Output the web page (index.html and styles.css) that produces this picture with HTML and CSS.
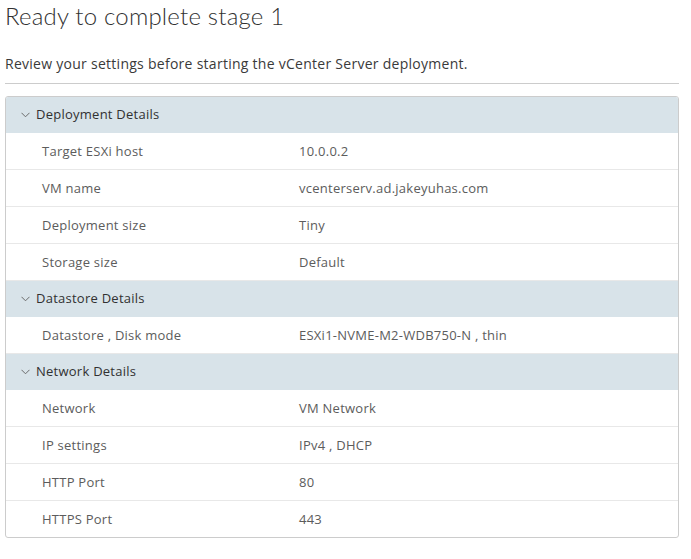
FILE: index.html
```html
<!DOCTYPE html>
<html>
<head>
<meta charset="utf-8">
<link rel="stylesheet" href="styles.css">
</head>
<body>
<div class="page">
  <h1 class="title">Ready to complete stage 1</h1>
  <p class="intro">Review your settings before starting the vCenter Server deployment.</p>
  <hr class="divider">
  <div class="card">
    <div class="section-head">
      <svg class="chev" width="9" height="6" viewBox="0 0 9 6"><path d="M0.5 0.8 L4.5 4.8 L8.5 0.8" fill="none" stroke="#6b6b6b" stroke-width="1"/></svg>
      <span>Deployment Details</span>
    </div>
    <div class="row"><span class="label">Target ESXi host</span><span class="value">10.0.0.2</span></div>
    <div class="row"><span class="label">VM name</span><span class="value">vcenterserv.ad.jakeyuhas.com</span></div>
    <div class="row"><span class="label">Deployment size</span><span class="value">Tiny</span></div>
    <div class="row"><span class="label">Storage size</span><span class="value">Default</span></div>
    <div class="section-head">
      <svg class="chev" width="9" height="6" viewBox="0 0 9 6"><path d="M0.5 0.8 L4.5 4.8 L8.5 0.8" fill="none" stroke="#6b6b6b" stroke-width="1"/></svg>
      <span>Datastore Details</span>
    </div>
    <div class="row"><span class="label">Datastore , Disk mode</span><span class="value">ESXi1-NVME-M2-WDB750-N , thin</span></div>
    <div class="section-head">
      <svg class="chev" width="9" height="6" viewBox="0 0 9 6"><path d="M0.5 0.8 L4.5 4.8 L8.5 0.8" fill="none" stroke="#6b6b6b" stroke-width="1"/></svg>
      <span>Network Details</span>
    </div>
    <div class="row"><span class="label">Network</span><span class="value">VM Network</span></div>
    <div class="row"><span class="label">IP settings</span><span class="value">IPv4 , DHCP</span></div>
    <div class="row"><span class="label">HTTP Port</span><span class="value">80</span></div>
    <div class="row last"><span class="label">HTTPS Port</span><span class="value">443</span></div>
  </div>
</div>
</body>
</html>
```

FILE: styles.css
```css
html, body {
  margin: 0;
  padding: 0;
  background: #ffffff;
}
body {
  font-family: "Open Sans", "Noto Sans", sans-serif;
  color: #565656;
}
.page {
  padding: 0 12px 0 5px;
}
.title {
  margin: 0;
  padding-top: 1px;
  font-family: Lato, "Noto Sans", sans-serif;
  font-size: 24px;
  line-height: 30px;
  font-weight: 300;
  color: #313131;
  letter-spacing: 0.2px;
}
.intro {
  margin: 23px 0 0 0;
  font-size: 14px;
  line-height: 20px;
  color: #3a3a3a;
  letter-spacing: 0.27px;
}
.divider {
  margin: 9px 0 0 0;
  border: 0;
  border-top: 1px solid #cccccc;
  height: 0;
}
.card {
  margin-top: 12px;
  border: 1px solid #cccccc;
  border-radius: 3px;
  overflow: hidden;
}
.section-head {
  display: flex;
  align-items: center;
  box-sizing: border-box;
  height: 36px;
  padding-bottom: 2px;
  background: #d8e3e9;
  padding-left: 15px;
  font-size: 13px;
  color: #313131;
  letter-spacing: 0.25px;
}
.chev {
  margin-right: 6px;
  margin-top: 2px;
}
.row {
  display: grid;
  grid-template-columns: 257px 1fr;
  align-items: center;
  box-sizing: content-box;
  height: 35px;
  padding-bottom: 1px;
  padding-left: 36px;
  border-bottom: 1px solid #e8e8e8;
  font-size: 13px;
  color: #5c5c5c;
  letter-spacing: 0.25px;
}
.row.last {
  border-bottom: 0;
}
```
